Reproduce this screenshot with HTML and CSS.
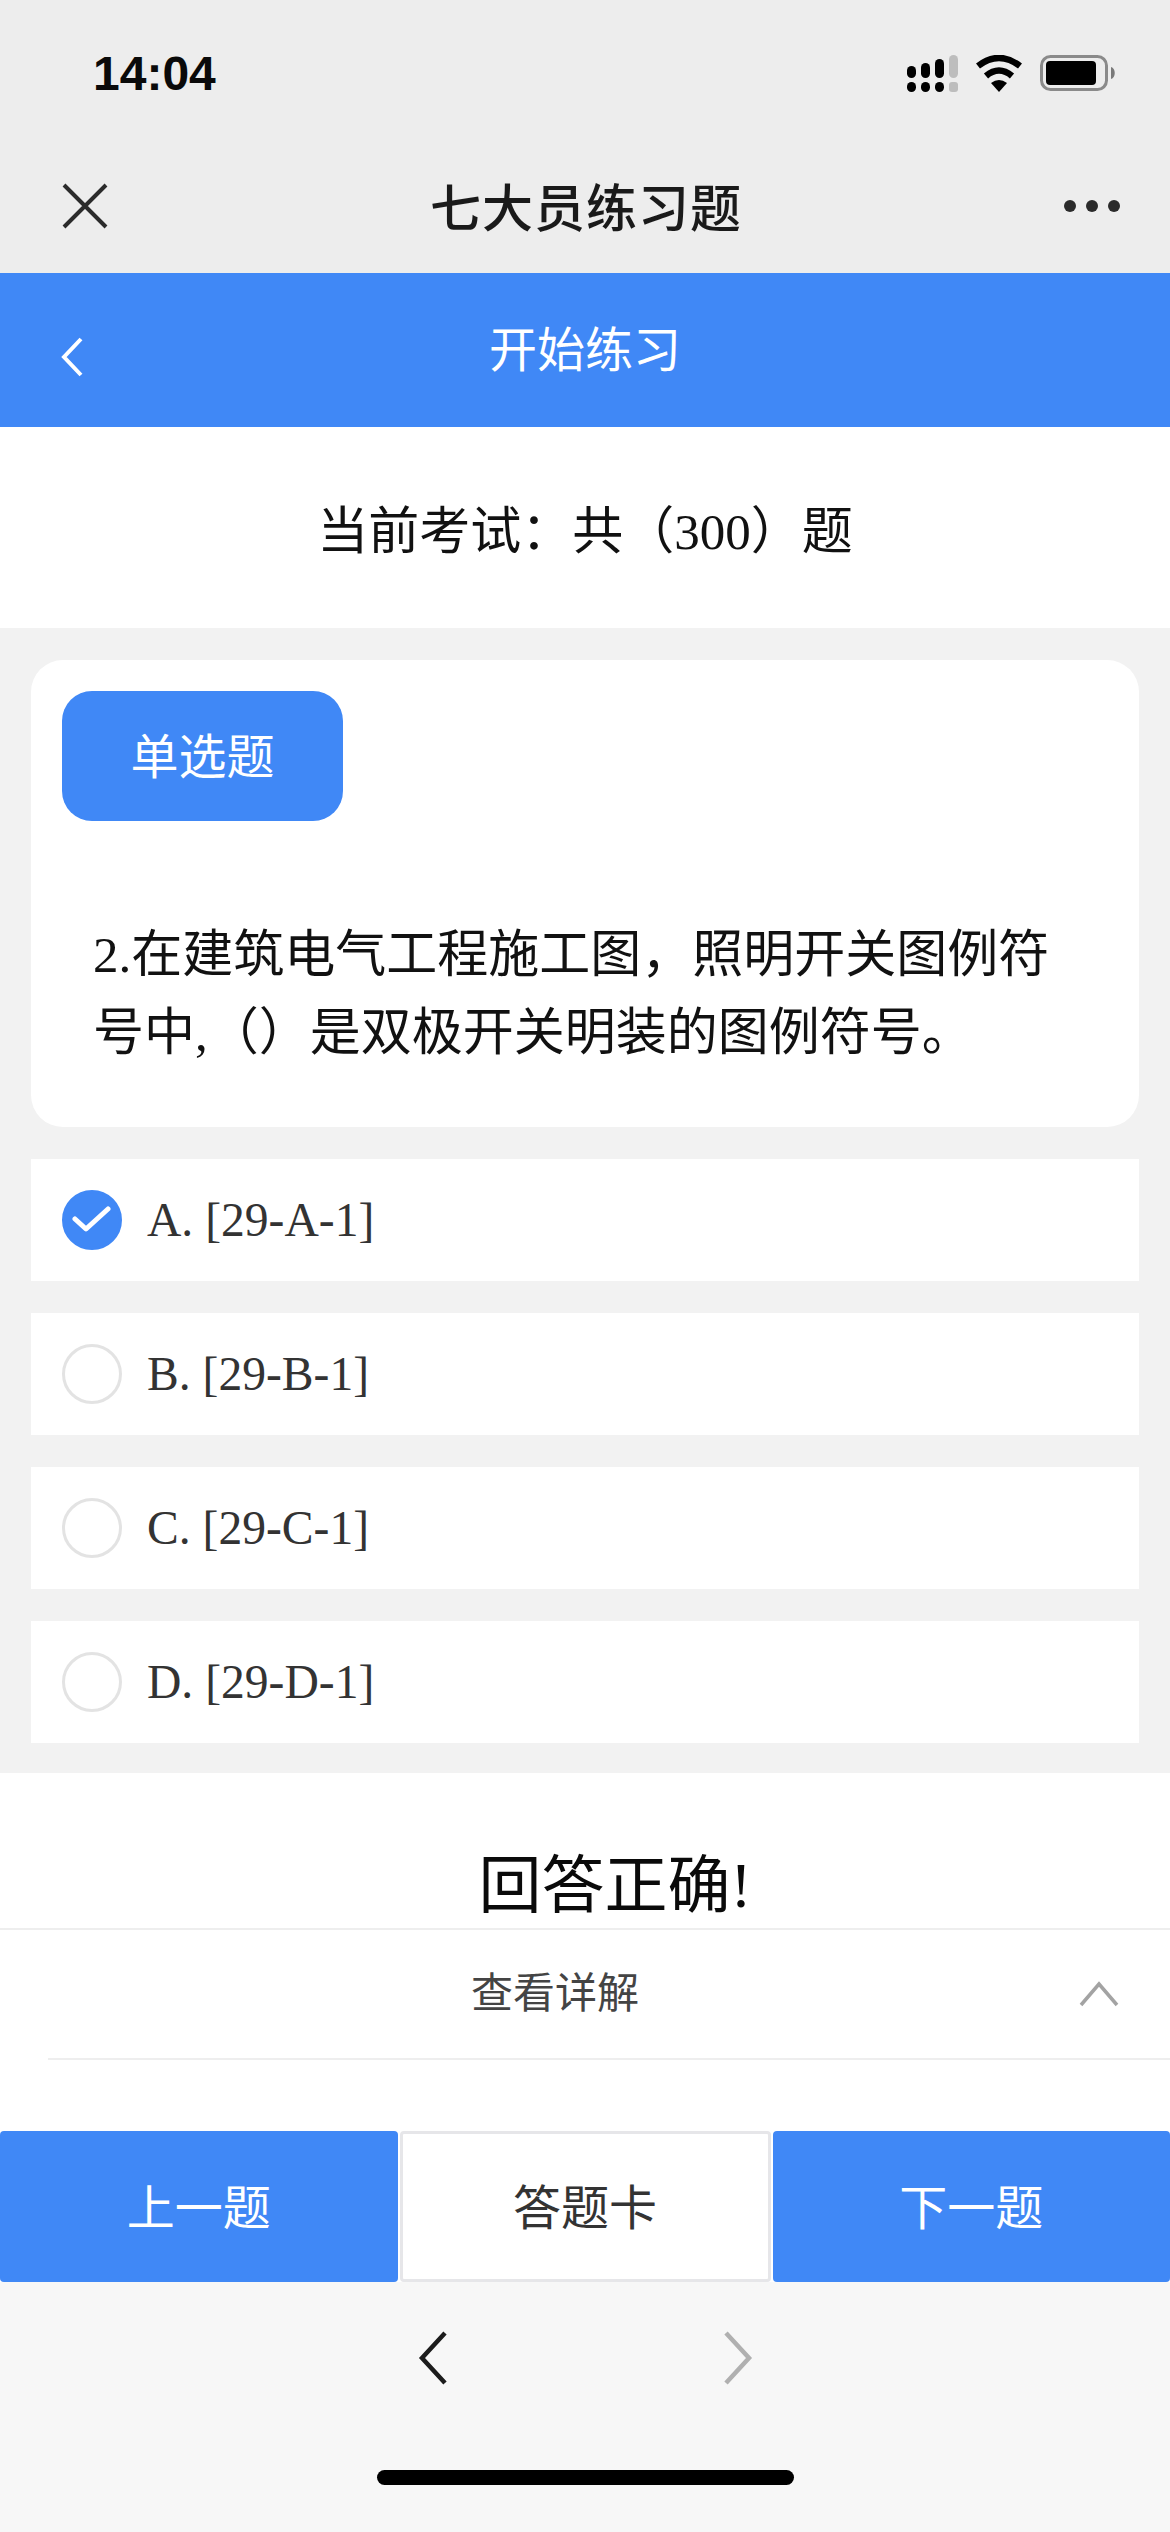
FILE: index.html
```html
<!DOCTYPE html>
<html lang="zh">
<head>
    <meta charset="UTF-8">
    <meta name="viewport" content="width=device-width, initial-scale=1.0">
    <title>七大员练习题</title>
    <link rel="stylesheet" href="styles.css">
</head>
<body>
    <div class="page">
        <div class="top">
            <div class="status">
                <span class="time">14:04</span>
                <div class="status-icons">
                    <svg width="51" height="38" viewBox="0 0 51 38">
                        <rect x="0" y="11" width="9" height="12" rx="4.5"/>
                        <rect x="14" y="8" width="9" height="15" rx="4.5"/>
                        <rect x="28" y="4" width="9" height="19" rx="4.5"/>
                        <rect x="42" y="0" width="9" height="23" rx="4.5" fill="#bdbdbd"/>
                        <rect x="0" y="27" width="9" height="10" rx="4.5"/>
                        <rect x="14" y="27" width="9" height="10" rx="4.5"/>
                        <rect x="28" y="27" width="9" height="10" rx="4.5"/>
                        <rect x="42" y="27" width="9" height="10" rx="3" fill="#bdbdbd"/>
                    </svg>
                    <svg width="48" height="38" viewBox="0 0 48 38">
                        <path d="M24 37 L16 28 Q24 22 32 28 Z"/>
                        <path d="M11 21 Q24 10 37 21" fill="none" stroke="#000" stroke-width="6.5"/>
                        <path d="M3 11 Q24 -5 45 11" fill="none" stroke="#000" stroke-width="6.5"/>
                    </svg>
                    <svg width="76" height="38" viewBox="0 0 76 38">
                        <rect x="1.5" y="1.5" width="65" height="33" rx="9" fill="none" stroke="#8a8a8a" stroke-width="3"/>
                        <rect x="6" y="6" width="50" height="24" rx="4"/>
                        <path d="M71 12 C76 13 76 23 71 24 Z" fill="#7a7a7a"/>
                    </svg>
                </div>
            </div>
            <div class="wx-bar">
                <svg width="46" height="46" viewBox="0 0 46 46">
                    <path d="M2 2 L44 44 M44 2 L2 44" stroke="#2b2b2b" stroke-width="4" fill="none"/>
                </svg>
                <span class="wx-title">七大员练习题</span>
                <div class="wx-more"><i></i><i></i><i></i></div>
            </div>
        </div>

        <div class="head">
            <svg class="head-back" width="24" height="40" viewBox="0 0 24 40">
                <path d="M21 2 L4 20 L21 38" fill="none" stroke="#fff" stroke-width="4"/>
            </svg>
            <span>开始练习</span>
        </div>

        <div class="exam-info">当前考试：共（300）题</div>

        <div class="main">
            <div class="card">
                <div class="tag">单选题</div>
                <p class="question">2.在建筑电气工程施工图，照明开关图例符号中,（）是双极开关明装的图例符号。</p>
            </div>

            <div class="option">
                <span class="circle checked">
                    <svg width="40" height="32" viewBox="0 0 40 32">
                        <path d="M3 15 L14 25 L36 5" fill="none" stroke="#fff" stroke-width="5" stroke-linecap="round" stroke-linejoin="round"/>
                    </svg>
                </span>
                A. [29-A-1]
            </div>
            <div class="option"><span class="circle"></span>B. [29-B-1]</div>
            <div class="option"><span class="circle"></span>C. [29-C-1]</div>
            <div class="option"><span class="circle"></span>D. [29-D-1]</div>
        </div>

        <div class="result">
            <div class="result-text">回答正确!</div>
            <div class="detail">
                <span>查看详解</span>
                <svg width="40" height="26" viewBox="0 0 40 26">
                    <path d="M2 24 L20 3 L38 24" fill="none" stroke="#a3a3a3" stroke-width="3.5"/>
                </svg>
            </div>
        </div>

        <div class="btns">
            <div class="btn blue">上一题</div>
            <div class="btn card-btn">答题卡</div>
            <div class="btn blue">下一题</div>
        </div>

        <div class="bottom">
            <div class="arrows">
                <svg width="30" height="54" viewBox="0 0 30 54">
                    <path d="M27 2 L4 27 L27 52" fill="none" stroke="#1c1c1c" stroke-width="4.5"/>
                </svg>
                <svg width="30" height="54" viewBox="0 0 30 54">
                    <path d="M3 2 L26 27 L3 52" fill="none" stroke="#b0b0b0" stroke-width="4.5"/>
                </svg>
            </div>
            <div class="home-bar"></div>
        </div>
    </div>
</body>
</html>
```

FILE: styles.css
```css
* {
    box-sizing: border-box;
}

html, body {
    margin: 0;
    padding: 0;
}

body {
    font-family: "Liberation Serif", "Noto Sans CJK SC", serif;
    background-color: #f7f7f7;
}

.page {
    width: 1170px;
    height: 2532px;
    display: flex;
    flex-direction: column;
    overflow: hidden;
}

/* status bar + wechat title */
.top {
    height: 273px;
    background-color: #ededed;
    font-family: "Liberation Sans", "Noto Sans CJK SC", sans-serif;
}

.status {
    height: 146px;
    padding: 46px 54px 0 93px;
    display: flex;
    justify-content: space-between;
    align-items: flex-start;
}

.time {
    font-size: 48px;
    line-height: 56px;
    font-weight: 700;
    color: #0a0a0a;
}

.status-icons {
    display: flex;
    align-items: center;
    gap: 17px;
    padding-top: 9px;
}

.wx-bar {
    height: 127px;
    padding: 0 50px 7px 62px;
    display: flex;
    align-items: center;
    justify-content: space-between;
}

.wx-title {
    padding-bottom: 2px;
    font-size: 51px;
    font-weight: 500;
    color: #1a1a1a;
    letter-spacing: 1px;
}

.wx-more {
    display: flex;
    gap: 10px;
}

.wx-more i {
    width: 12px;
    height: 12px;
    border-radius: 50%;
    background-color: #2b2b2b;
}

.head {
    height: 154px;
    position: relative;
    background-color: #4088f6;
    color: #fff;
    font-family: "Noto Sans CJK SC", sans-serif;
    font-size: 48px;
    display: flex;
    justify-content: center;
    align-items: center;
    padding-bottom: 8px;
}

.head-back {
    position: absolute;
    left: 60px;
    top: 64px;
}

.exam-info {
    height: 201px;
    padding-top: 10px;
    background-color: #fff;
    color: #111;
    font-size: 51px;
    text-align: center;
    line-height: 191px;
}

.main {
    height: 1145px;
    background-color: #f2f2f2;
    padding: 32px 31px 0;
}

.card {
    height: 467px;
    background-color: #fff;
    border-radius: 32px;
    padding: 31px;
    margin-bottom: 32px;
}

.tag {
    width: 281px;
    height: 130px;
    padding-bottom: 6px;
    background-color: #4088f6;
    color: #fff;
    border-radius: 30px;
    font-family: "Noto Sans CJK SC", sans-serif;
    font-size: 48px;
    display: flex;
    align-items: center;
    justify-content: center;
}

.question {
    margin: 95px 0 0 31px;
    width: 1000px;
    font-size: 51px;
    line-height: 78px;
    color: #111;
}

.option {
    height: 122px;
    margin-bottom: 32px;
    padding-left: 31px;
    background-color: #fff;
    color: #333;
    font-size: 47.6px;
    display: flex;
    align-items: center;
    gap: 25px;
}

.circle {
    width: 60px;
    height: 60px;
    border-radius: 50%;
    border: 3px solid #e3e3e3;
    display: flex;
    align-items: center;
    justify-content: center;
}

.circle.checked {
    background-color: #4088f6;
    border-color: #4088f6;
}

.result {
    height: 358px;
    background-color: #fff;
}

.result-text {
    height: 157px;
    padding-top: 71px;
    padding-left: 60px;
    border-bottom: 2px solid #eeeeee;
    text-align: center;
    font-size: 63px;
    line-height: 84px;
    color: #0a0a0a;
}

.detail {
    height: 130px;
    margin-left: 48px;
    position: relative;
    border-bottom: 2px solid #eeeeee;
    font-family: "Noto Sans CJK SC", sans-serif;
    font-size: 42px;
    color: #444;
    display: flex;
    align-items: center;
    justify-content: center;
    padding: 0 108px 10px 0;
}

.detail svg {
    position: absolute;
    right: 51px;
    top: 51px;
}

.btns {
    height: 151px;
    display: flex;
    gap: 2px;
    background-color: #fff;
    font-family: "Noto Sans CJK SC", sans-serif;
    font-size: 48px;
}

.btn {
    flex: 1;
    display: flex;
    align-items: center;
    justify-content: center;
    border-radius: 4px;
    padding-bottom: 6px;
}

.blue {
    background-color: #4088f6;
    color: #fff;
}

.card-btn {
    flex: none;
    width: 371px;
    color: #333;
    border: 3px solid #e6e6e9;
}

.bottom {
    flex: 1;
    background-color: #f7f7f7;
}

.arrows {
    display: flex;
    justify-content: center;
    gap: 275px;
    padding-top: 49px;
}

.home-bar {
    width: 417px;
    height: 15px;
    margin: 85px auto 0;
    border-radius: 8px;
    background-color: #000;
}
```
